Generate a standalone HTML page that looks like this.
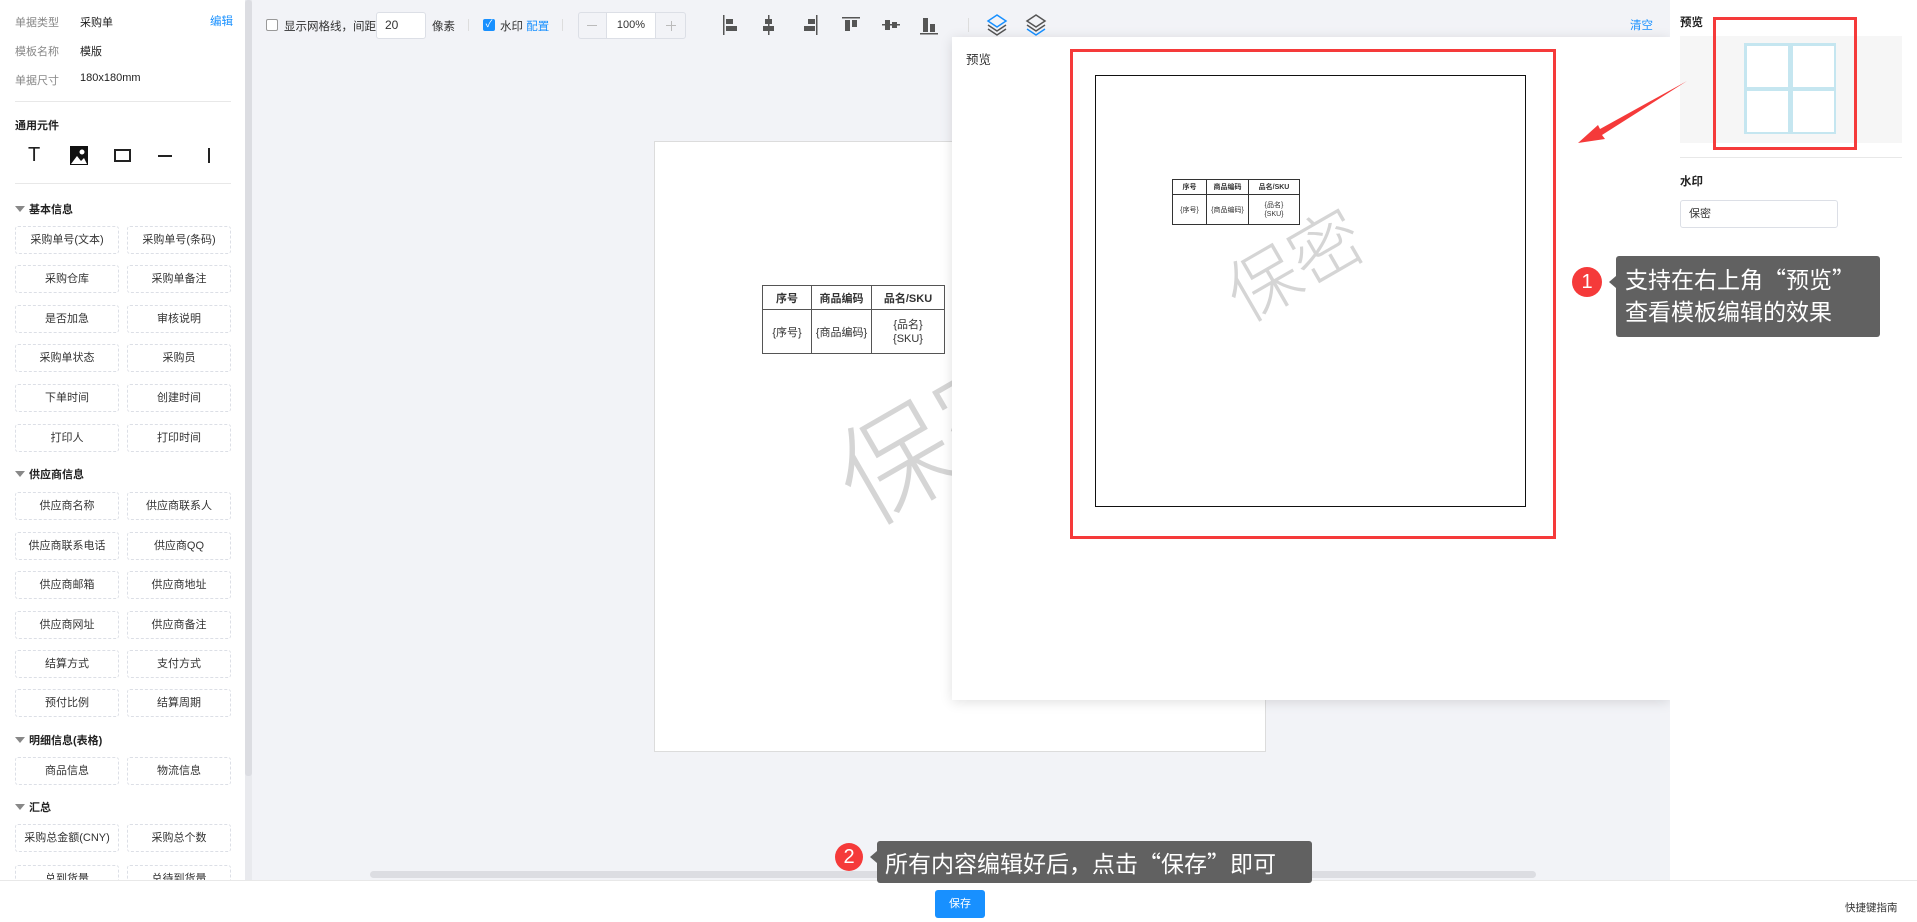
<!DOCTYPE html>
<html><head><meta charset="utf-8"><style>
*{box-sizing:border-box;margin:0;padding:0}
body{width:1917px;height:922px;overflow:hidden;background:#f2f3f7;font-family:"Liberation Sans","Noto Sans CJK SC",sans-serif;font-size:12px;color:#333;position:relative}
.a{position:absolute}
.lp{left:0;top:0;width:245px;height:880px;background:#fff;overflow:hidden}
.lab{color:#888;font-size:11px}
.val{color:#222;font-size:11px}
.sec{font-weight:bold;font-size:11px;color:#222}
.tri{display:inline-block;width:0;height:0;border-left:5px solid transparent;border-right:5px solid transparent;border-top:6px solid #888;margin-right:4px;vertical-align:1px}
.btn{position:absolute;width:104px;height:28px;border:1px dashed #dcdfe6;border-radius:3px;text-align:center;line-height:26px;font-size:11px;color:#333;background:#fff}
.tb{font-size:11.5px;color:#333}
.cb{width:12px;height:12px;border:1px solid #999;border-radius:2px;background:#fff}
table{border-collapse:collapse}
td{text-align:center;color:#333}
.tip{background:#616161;color:#fff;border-radius:3px;font-family:"Noto Sans CJK SC",sans-serif}
.dot{background:#f53a3a;color:#fff;border-radius:50%;text-align:center;font-size:20px}
</style></head><body>

<div class="a lp">
 <div class="a lab" style="left:15px;top:14px">单据类型</div><div class="a val" style="left:80px;top:14px">采购单</div><div class="a" style="left:210px;top:13px;color:#1890ff;font-size:11.5px">编辑</div>
 <div class="a lab" style="left:15px;top:43px">模板名称</div><div class="a val" style="left:80px;top:43px">模版</div>
 <div class="a lab" style="left:15px;top:72px">单据尺寸</div><div class="a val" style="left:80px;top:72px">180x180mm</div>
 <div class="a" style="left:15px;top:101px;width:216px;height:1px;background:#e8e8e8"></div>
 <div class="a sec" style="left:15px;top:117px">通用元件</div>
 <div class="a" style="left:28px;top:145px;font-size:20px;line-height:20px;color:#222">T</div>
 <svg class="a" style="left:70px;top:146px" width="18" height="19"><rect width="18" height="19" fill="#111"/><circle cx="12" cy="6" r="2.5" fill="#fff"/><path d="M1 18 L7 10 L11 15 L14 12 L17 18Z" fill="#fff"/></svg>
 <div class="a" style="left:114px;top:149px;width:17px;height:13px;border:2px solid #222"></div>
 <div class="a" style="left:158px;top:155px;width:14px;height:2px;background:#222"></div>
 <div class="a" style="left:208px;top:148px;width:2px;height:15px;background:#222"></div>
 <div class="a" style="left:15px;top:183px;width:216px;height:1px;background:#e8e8e8"></div>

 <div class="a sec" style="left:15px;top:201px"><span class="tri"></span>基本信息</div>
 <div class="btn" style="left:15px;top:226px">采购单号(文本)</div><div class="btn" style="left:127px;top:226px">采购单号(条码)</div>
 <div class="btn" style="left:15px;top:265px">采购仓库</div><div class="btn" style="left:127px;top:265px">采购单备注</div>
 <div class="btn" style="left:15px;top:305px">是否加急</div><div class="btn" style="left:127px;top:305px">审核说明</div>
 <div class="btn" style="left:15px;top:344px">采购单状态</div><div class="btn" style="left:127px;top:344px">采购员</div>
 <div class="btn" style="left:15px;top:384px">下单时间</div><div class="btn" style="left:127px;top:384px">创建时间</div>
 <div class="btn" style="left:15px;top:424px">打印人</div><div class="btn" style="left:127px;top:424px">打印时间</div>
 <div class="a sec" style="left:15px;top:466px"><span class="tri"></span>供应商信息</div>
 <div class="btn" style="left:15px;top:492px">供应商名称</div><div class="btn" style="left:127px;top:492px">供应商联系人</div>
 <div class="btn" style="left:15px;top:532px">供应商联系电话</div><div class="btn" style="left:127px;top:532px">供应商QQ</div>
 <div class="btn" style="left:15px;top:571px">供应商邮箱</div><div class="btn" style="left:127px;top:571px">供应商地址</div>
 <div class="btn" style="left:15px;top:611px">供应商网址</div><div class="btn" style="left:127px;top:611px">供应商备注</div>
 <div class="btn" style="left:15px;top:650px">结算方式</div><div class="btn" style="left:127px;top:650px">支付方式</div>
 <div class="btn" style="left:15px;top:689px">预付比例</div><div class="btn" style="left:127px;top:689px">结算周期</div>
 <div class="a sec" style="left:15px;top:732px"><span class="tri"></span>明细信息(表格)</div>
 <div class="btn" style="left:15px;top:757px">商品信息</div><div class="btn" style="left:127px;top:757px">物流信息</div>
 <div class="a sec" style="left:15px;top:799px"><span class="tri"></span>汇总</div>
 <div class="btn" style="left:15px;top:824px">采购总金额(CNY)</div><div class="btn" style="left:127px;top:824px">采购总个数</div>
 <div class="btn" style="left:15px;top:865px">总到货量</div><div class="btn" style="left:127px;top:865px">总待到货量</div>
</div>
<div class="a" style="left:245px;top:0;width:7px;height:880px;background:#e9eaee"></div>
<div class="a" style="left:245px;top:0;width:7px;height:776px;background:#dcdde2;border-radius:3px"></div>

<div class="a cb" style="left:266px;top:19px"></div>
<div class="a tb" style="left:284px;top:18px">显示网格线，间距</div>
<div class="a" style="left:376px;top:12px;width:50px;height:27px;background:#fff;border:1px solid #dcdfe6;border-radius:3px;padding-left:8px;line-height:25px;font-size:12px">20</div>
<div class="a tb" style="left:432px;top:18px">像素</div>
<div class="a" style="left:468px;top:19px;width:1px;height:12px;background:#ddd"></div>
<div class="a" style="left:483px;top:19px;width:12px;height:12px;background:#1890ff;border-radius:2px;color:#fff;font-size:10px;line-height:12px;text-align:center">✓</div>
<div class="a tb" style="left:500px;top:18px">水印 <span style="color:#1890ff">配置</span></div>
<div class="a" style="left:562px;top:19px;width:1px;height:12px;background:#ddd"></div>
<div class="a" style="left:578px;top:12px;width:108px;height:27px;border:1px solid #dcdfe6;border-radius:3px;background:#f2f3f7"></div>
<div class="a" style="left:606px;top:12px;width:50px;height:27px;background:#fff;border:1px solid #dcdfe6;text-align:center;line-height:25px;font-size:11px">100%</div>
<div class="a" style="left:587px;top:25px;width:10px;height:1px;background:#bbb"></div>
<div class="a" style="left:666px;top:25px;width:10px;height:1px;background:#bbb"></div>
<div class="a" style="left:670.5px;top:20.5px;width:1px;height:10px;background:#bbb"></div>
<svg class="a" style="left:722px;top:15px" width="330" height="22" fill="#555">
 <rect x="1" y="0" width="1.5" height="20"/><rect x="4" y="4" width="7" height="5"/><rect x="4" y="11" width="11" height="5"/>
 <rect x="46" y="0" width="1.5" height="20"/><rect x="43" y="4" width="7" height="5"/><rect x="41" y="11" width="11" height="5"/>
 <rect x="94" y="0" width="1.5" height="20"/><rect x="86" y="4" width="7" height="5"/><rect x="82" y="11" width="11" height="5"/>
 <rect x="120" y="2" width="18" height="1.5"/><rect x="123" y="5" width="5" height="11"/><rect x="130" y="5" width="5" height="7"/>
 <rect x="160" y="9" width="18" height="1.5"/><rect x="163" y="5" width="5" height="10"/><rect x="170" y="7" width="5" height="6"/>
 <rect x="198" y="18" width="18" height="1.5"/><rect x="201" y="3" width="5" height="14"/><rect x="208" y="9" width="5" height="8"/>
 <rect x="246" y="3" width="1" height="14" fill="#ddd"/>
</svg>
<svg class="a" style="left:986px;top:14px" width="70" height="22" fill="none" stroke-width="1.5">
 <path d="M11 1 L20 7 L11 13 L2 7Z" stroke="#1890ff"/><path d="M2 11 L11 17 L20 11" stroke="#555"/><path d="M2 15 L11 21 L20 15" stroke="#555"/>
 <path d="M50 1 L59 7 L50 13 L41 7Z" stroke="#555"/><path d="M41 11 L50 17 L59 11" stroke="#555"/><path d="M41 15 L50 21 L59 15" stroke="#1890ff"/>
</svg>
<div class="a" style="left:1630px;top:17px;color:#1890ff;font-size:11.5px">清空</div>

<div class="a" style="left:654px;top:141px;width:612px;height:611px;background:#fff;border:1px solid #dcdcdc;overflow:hidden">
 <table class="a" style="left:107px;top:143px;width:183px;border:1.5px solid #555;font-size:11px">
  <tr style="height:24px"><td style="border:1.5px solid #555;font-weight:bold;width:49px">序号</td><td style="border:1.5px solid #555;font-weight:bold;width:60px">商品编码</td><td style="border:1.5px solid #555;font-weight:bold">品名/SKU</td></tr>
  <tr style="height:44px"><td style="border:1.5px solid #555">{序号}</td><td style="border:1.5px solid #555">{商品编码}</td><td style="border:1.5px solid #555;line-height:14px">{品名}<br>{SKU}</td></tr>
 </table>
 <div class="a" style="left:172px;top:203px;font-size:115px;color:#d5d5d5;transform:rotate(-30deg);white-space:nowrap;font-family:'Noto Sans CJK SC',sans-serif;font-weight:300">保密</div>
</div>
<div class="a" style="left:370px;top:871px;width:1166px;height:7px;background:#dcdde2;border-radius:4px"></div>

<div class="a" style="left:952px;top:37px;width:718px;height:663px;background:#fff;box-shadow:0 2px 12px rgba(0,0,0,.12);overflow:hidden">
 <div class="a" style="left:14px;top:12px;font-size:12.5px;color:#333">预览</div>
 <div class="a" style="left:143px;top:38px;width:431px;height:432px;border:1px solid #111;overflow:hidden">
  <table class="a" style="left:76px;top:103px;width:128px;border:1px solid #333;font-size:7px">
   <tr style="height:15px"><td style="border:1px solid #333;font-weight:bold;width:34px">序号</td><td style="border:1px solid #333;font-weight:bold;width:42px">商品编码</td><td style="border:1px solid #333;font-weight:bold">品名/SKU</td></tr>
   <tr style="height:30px"><td style="border:1px solid #333">{序号}</td><td style="border:1px solid #333">{商品编码}</td><td style="border:1px solid #333;line-height:9px">{品名}<br>{SKU}</td></tr>
  </table>
  <div class="a" style="left:124px;top:132px;font-size:72px;color:#d5d5d5;transform:rotate(-30deg);white-space:nowrap;font-family:'Noto Sans CJK SC',sans-serif;font-weight:300">保密</div>
 </div>
 <div class="a" style="left:118px;top:12px;width:486px;height:490px;border:3px solid #f53a3a"></div>
</div>

<div class="a" style="left:1670px;top:0;width:247px;height:880px;background:#fff"></div>
<div class="a" style="left:1680px;top:14px;font-size:11.5px;font-weight:bold;color:#222">预览</div>
<div class="a" style="left:1680px;top:36px;width:222px;height:107px;background:#f6f6f6"></div>
<div class="a" style="left:1744px;top:43px;width:92px;height:91px;background:#c5e6f0"></div>
<div class="a" style="left:1747px;top:46px;width:41px;height:41px;background:#fff"></div>
<div class="a" style="left:1793px;top:46px;width:41px;height:41px;background:#fff"></div>
<div class="a" style="left:1747px;top:91px;width:41px;height:41px;background:#fff"></div>
<div class="a" style="left:1793px;top:91px;width:41px;height:41px;background:#fff"></div>
<div class="a" style="left:1713px;top:17px;width:144px;height:133px;border:3px solid #f53a3a"></div>
<div class="a" style="left:1680px;top:157px;width:222px;height:1px;background:#e8e8e8"></div>
<div class="a" style="left:1680px;top:173px;font-size:11.5px;font-weight:bold;color:#222">水印</div>
<div class="a" style="left:1680px;top:200px;width:158px;height:28px;border:1px solid #dcdfe6;border-radius:3px;padding-left:8px;line-height:26px;font-size:11px">保密</div>

<svg class="a" style="left:1570px;top:75px" width="125" height="75"><path d="M117 6 L30 54 L28 50 L8 68 L35 64 L32 60 Z" fill="#f53a3a"/></svg>

<div class="a dot" style="left:1572px;top:267px;width:30px;height:30px;line-height:30px">1</div>
<div class="a" style="left:1609px;top:276px;width:0;height:0;border-top:6px solid transparent;border-bottom:6px solid transparent;border-right:7px solid #616161"></div>
<div class="a tip" style="left:1616px;top:256px;width:264px;height:81px;padding:6px 0 0 9px;font-size:23px;line-height:32px">支持在右上角“预览”<br>查看模板编辑的效果</div>

<div class="a" style="left:0;top:880px;width:1917px;height:42px;background:#fff;border-top:1px solid #e8e8e8"></div>
<div class="a" style="left:935px;top:890px;width:50px;height:28px;background:#1890ff;border-radius:3px;color:#fff;text-align:center;line-height:28px;font-size:11px">保存</div>
<div class="a" style="left:1845px;top:900px;font-size:10.5px;color:#333">快捷键指南</div>

<div class="a dot" style="left:835px;top:843px;width:28px;height:28px;line-height:28px">2</div>
<div class="a" style="left:870px;top:851px;width:0;height:0;border-top:6px solid transparent;border-bottom:6px solid transparent;border-right:7px solid #616161"></div>
<div class="a tip" style="left:877px;top:841px;width:435px;height:42px;padding-left:8px;font-size:23px;line-height:42px">所有内容编辑好后，点击“保存”即可</div>
</body></html>
